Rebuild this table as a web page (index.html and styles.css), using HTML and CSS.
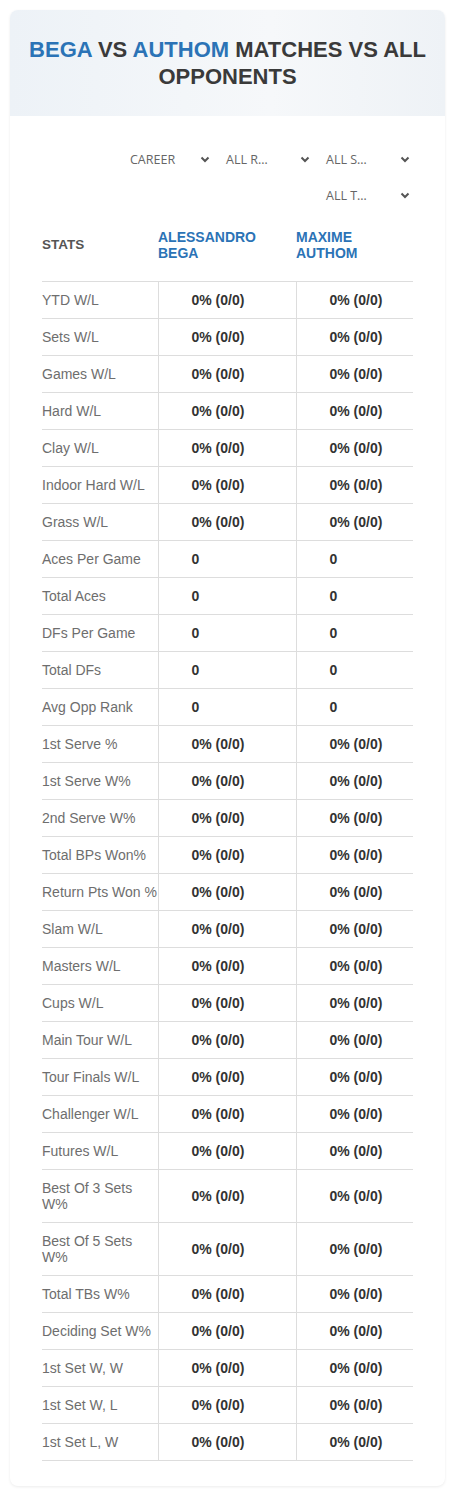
FILE: index.html
```html
<!DOCTYPE html>
<html>
<head>
<meta charset="utf-8">
<link rel="stylesheet" href="styles.css">
</head>
<body>
<div class="page">
  <div class="card">
    <div class="card-head">
      <h1 class="title"><span class="blue">BEGA</span> VS <span class="blue">AUTHOM</span> MATCHES VS ALL OPPONENTS</h1>
    </div>
    <div class="card-body">
      <div class="filters">
        <div class="select select-first"><span class="sel-text">CAREER</span><svg class="chev" width="10" height="7" viewBox="0 0 10 7"><path d="M1.5 1.5 L5 5 L8.5 1.5" fill="none" stroke="#555" stroke-width="2"/></svg></div>
        <div class="select"><span class="sel-text">ALL R…</span><svg class="chev" width="10" height="7" viewBox="0 0 10 7"><path d="M1.5 1.5 L5 5 L8.5 1.5" fill="none" stroke="#555" stroke-width="2"/></svg></div>
        <div class="select"><span class="sel-text">ALL S…</span><svg class="chev" width="10" height="7" viewBox="0 0 10 7"><path d="M1.5 1.5 L5 5 L8.5 1.5" fill="none" stroke="#555" stroke-width="2"/></svg></div>
        <div class="select"><span class="sel-text">ALL T…</span><svg class="chev" width="10" height="7" viewBox="0 0 10 7"><path d="M1.5 1.5 L5 5 L8.5 1.5" fill="none" stroke="#555" stroke-width="2"/></svg></div>
      </div>
      <table class="stats">
        <colgroup><col class="c1"><col class="c2"><col class="c3"></colgroup>
        <thead>
          <tr><th class="h-stats">STATS</th><th class="h-player">ALESSANDRO BEGA</th><th class="h-player">MAXIME AUTHOM</th></tr>
        </thead>
        <tbody>
          <tr><td>YTD W/L</td><td>0% (0/0)</td><td>0% (0/0)</td></tr>
          <tr><td>Sets W/L</td><td>0% (0/0)</td><td>0% (0/0)</td></tr>
          <tr><td>Games W/L</td><td>0% (0/0)</td><td>0% (0/0)</td></tr>
          <tr><td>Hard W/L</td><td>0% (0/0)</td><td>0% (0/0)</td></tr>
          <tr><td>Clay W/L</td><td>0% (0/0)</td><td>0% (0/0)</td></tr>
          <tr><td>Indoor Hard W/L</td><td>0% (0/0)</td><td>0% (0/0)</td></tr>
          <tr><td>Grass W/L</td><td>0% (0/0)</td><td>0% (0/0)</td></tr>
          <tr><td>Aces Per Game</td><td>0</td><td>0</td></tr>
          <tr><td>Total Aces</td><td>0</td><td>0</td></tr>
          <tr><td>DFs Per Game</td><td>0</td><td>0</td></tr>
          <tr><td>Total DFs</td><td>0</td><td>0</td></tr>
          <tr><td>Avg Opp Rank</td><td>0</td><td>0</td></tr>
          <tr><td>1st Serve %</td><td>0% (0/0)</td><td>0% (0/0)</td></tr>
          <tr><td>1st Serve W%</td><td>0% (0/0)</td><td>0% (0/0)</td></tr>
          <tr><td>2nd Serve W%</td><td>0% (0/0)</td><td>0% (0/0)</td></tr>
          <tr><td>Total BPs Won%</td><td>0% (0/0)</td><td>0% (0/0)</td></tr>
          <tr><td>Return Pts Won %</td><td>0% (0/0)</td><td>0% (0/0)</td></tr>
          <tr><td>Slam W/L</td><td>0% (0/0)</td><td>0% (0/0)</td></tr>
          <tr><td>Masters W/L</td><td>0% (0/0)</td><td>0% (0/0)</td></tr>
          <tr><td>Cups W/L</td><td>0% (0/0)</td><td>0% (0/0)</td></tr>
          <tr><td>Main Tour W/L</td><td>0% (0/0)</td><td>0% (0/0)</td></tr>
          <tr><td>Tour Finals W/L</td><td>0% (0/0)</td><td>0% (0/0)</td></tr>
          <tr><td>Challenger W/L</td><td>0% (0/0)</td><td>0% (0/0)</td></tr>
          <tr><td>Futures W/L</td><td>0% (0/0)</td><td>0% (0/0)</td></tr>
          <tr><td>Best Of 3 Sets W%</td><td>0% (0/0)</td><td>0% (0/0)</td></tr>
          <tr><td>Best Of 5 Sets W%</td><td>0% (0/0)</td><td>0% (0/0)</td></tr>
          <tr><td>Total TBs W%</td><td>0% (0/0)</td><td>0% (0/0)</td></tr>
          <tr><td>Deciding Set W%</td><td>0% (0/0)</td><td>0% (0/0)</td></tr>
          <tr><td>1st Set W, W</td><td>0% (0/0)</td><td>0% (0/0)</td></tr>
          <tr><td>1st Set W, L</td><td>0% (0/0)</td><td>0% (0/0)</td></tr>
          <tr><td>1st Set L, W</td><td>0% (0/0)</td><td>0% (0/0)</td></tr>
        </tbody>
      </table>
    </div>
  </div>
</div>
</body>
</html>
```

FILE: styles.css
```css
html, body {
  margin: 0;
  padding: 0;
  background: #fff;
}
.page {
  padding: 10px;
}
.card {
  background: #fff;
  border-radius: 8px;
  box-shadow: 0 1px 3px rgba(0,0,0,0.08);
  overflow: hidden;
}
.card-head {
  background: linear-gradient(90deg, #edf2f7 0%, #f6f8fa 60%, #eef2f6 100%);
  height: 106px;
  display: flex;
  align-items: center;
  justify-content: center;
  padding: 0 12px;
}
.title {
  margin: 0;
  text-align: center;
  font-family: "Liberation Sans", Arial, sans-serif;
  font-weight: bold;
  font-size: 22px;
  line-height: 27px;
  color: #3a3a3a;
}
.blue {
  color: #2b73b6;
}
.card-body {
  padding: 31px 32px 25px 32px;
}
.filters {
  display: flex;
  flex-wrap: wrap;
  justify-content: flex-end;
  column-gap: 8px;
  row-gap: 12px;
}
.select {
  width: 92px;
  height: 24px;
  display: flex;
  align-items: center;
  justify-content: space-between;
  padding: 0 3px 0 5px;
  box-sizing: border-box;
  font-family: "Open Sans", "Noto Sans", sans-serif;
  font-size: 12.5px;
  color: #666;
}
.select-first {
  padding-left: 9px;
}
.chev {
  display: block;
}
.stats {
  width: 100%;
  border-collapse: collapse;
  margin-top: 2px;
  font-family: "Liberation Sans", Arial, sans-serif;
  font-size: 14px;
  table-layout: fixed;
}
.c1 { width: 116px; }
.c2 { width: 138px; }
.c3 { width: 117px; }
.stats th {
  text-align: left;
  font-weight: bold;
  line-height: 16px;
  padding: 20px 0 20px 0;
  vertical-align: middle;
}
.h-stats {
  color: #555;
  font-size: 13.5px;
}
.h-player {
  color: #2b73b6;
  padding-right: 20px !important;
}
.stats td {
  border-top: 1px solid #dddddd;
  padding: 10px 0;
  line-height: 16px;
  vertical-align: middle;
}
.stats tbody tr:last-child td {
  border-bottom: 1px solid #dddddd;
}
.stats td:first-child {
  color: #6e6e6e;
  padding-right: 0;
}
.stats td + td {
  border-left: 1px solid #dddddd;
  padding-left: 33px;
  font-weight: bold;
  color: #333;
}
```
